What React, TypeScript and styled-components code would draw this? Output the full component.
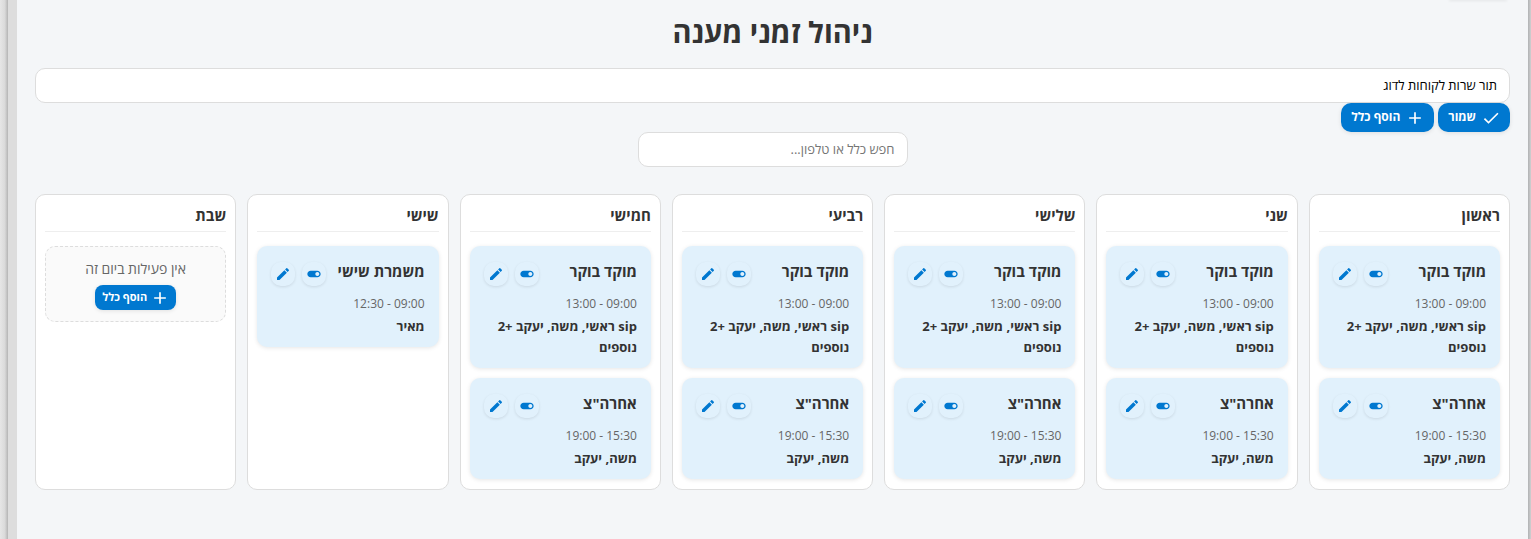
import React from "react";
import styled, { createGlobalStyle } from "styled-components";
import { MdAdd, MdCheck, MdEdit, MdToggleOn } from "react-icons/md";

type Rule = { name: string; hours: string; people: string };
type Day = { name: string; rules: Rule[] };

const morning: Rule = {
  name: "מוקד בוקר",
  hours: "09:00 - 13:00",
  people: "sip ראשי, משה, יעקב +2 נוספים",
};
const afternoon: Rule = { name: 'אחרה"צ', hours: "15:30 - 19:00", people: "משה, יעקב" };

const week: Day[] = [
  ...["ראשון", "שני", "שלישי", "רביעי", "חמישי"].map((name) => ({
    name,
    rules: [morning, afternoon],
  })),
  { name: "שישי", rules: [{ name: "משמרת שישי", hours: "09:00 - 12:30", people: "מאיר" }] },
  { name: "שבת", rules: [] },
];

const GlobalStyle = createGlobalStyle`
  *, *::before, *::after { box-sizing: border-box; }
  body {
    margin: 0;
    background: #f4f6f8;
    color: #333;
    font-family: "Open Sans", "Noto Sans", sans-serif;
    font-size: 13px;
    line-height: 21px;
  }
  button, input { font-family: inherit; }
`;

const Frame = styled.div`
  display: flex;
  min-height: 100vh;
  direction: rtl;
  overflow: hidden;
`;

const EndEdge = styled.div`
  flex: 0 0 3px;
  background: linear-gradient(to right, #b0b2b4, #cfd0d1);
`;

const StartEdge = styled.div`
  flex: 0 0 17px;
  border-right: 9px solid #ddd;
  background: linear-gradient(to right, #e6e6e6, #dadada 60%, #b4b4b4);
`;

const Page = styled.main`
  flex: 1;
  min-width: 0;
  padding: 0 18px 48px;
`;

/* Lower shadow of the control that is scrolled out above the heading. */
const ScrolledShadow = styled.div`
  width: 56px;
  margin: 0 4px 12px;
  box-shadow: 0 0 3px 1px rgba(0, 0, 0, 0.08);
`;

const Title = styled.h1`
  margin: 0 0 16px;
  font-size: 29px;
  line-height: 40px;
  font-weight: 700;
  text-align: center;
`;

const TextBox = styled.input`
  display: block;
  width: 100%;
  height: 35px;
  padding: 0 12px 2px;
  border: 1px solid #ddd;
  border-radius: 10px;
  background: #fff;
  color: #000;
  font-size: 13px;
`;

const SearchBox = styled(TextBox)`
  width: 270px;
  margin: 0 auto 27px;
  &::placeholder { color: #757575; opacity: 1; }
`;

const Toolbar = styled.div`
  display: flex;
  gap: 4px;
`;

const ActionButton = styled.button<{ $small?: boolean }>`
  display: inline-flex;
  align-items: center;
  gap: ${(p) => (p.$small ? 3 : 5)}px;
  height: ${(p) => (p.$small ? 25 : 29)}px;
  padding: ${(p) => (p.$small ? "0 6px 0 7px" : "0 9px 0 10px")};
  border: 0;
  border-radius: ${(p) => (p.$small ? 8 : 10)}px;
  background: #0078d0;
  box-shadow: 0 1px 4px rgba(0, 0, 0, 0.1);
  color: #fff;
  font-size: ${(p) => (p.$small ? 11 : 12)}px;
  line-height: 16px;
  font-weight: 700;
  white-space: nowrap;
  svg { width: 20px; height: 20px; }
`;

const ActionLabel = styled.span`
  padding-bottom: 2px;
`;

const WeekGrid = styled.div`
  display: grid;
  grid-template-columns: repeat(7, minmax(0, 1fr));
  gap: 11px;
`;

const DayColumn = styled.section`
  display: flex;
  flex-direction: column;
  gap: 10px;
  padding: 9px 9px 10px;
  border: 1px solid #ddd;
  border-radius: 10px;
  background: #fff;
`;

const DayName = styled.h2`
  margin: 0 0 4px;
  padding-bottom: 4px;
  border-bottom: 1px solid #eee;
  font-size: 15px;
  line-height: 23px;
  font-weight: 700;
`;

const RuleCard = styled.article`
  padding: 14px 14px 10px;
  border-radius: 10px;
  background: #e1f1fc;
  box-shadow: 0 1px 4px rgba(0, 0, 0, 0.1);
`;

const RuleHeader = styled.div`
  display: flex;
  align-items: flex-end;
  justify-content: space-between;
  margin-bottom: 7px;
`;

const RuleName = styled.h3`
  margin: 0;
  padding-bottom: 3px;
  font-size: 15px;
  line-height: 23px;
  font-weight: 700;
  white-space: nowrap;
`;

const RuleActions = styled.div`
  display: flex;
  gap: 7px;
`;

const IconButton = styled.button`
  display: flex;
  align-items: center;
  justify-content: center;
  width: 24px;
  height: 24px;
  padding: 0;
  border: 0;
  border-radius: 10px;
  background: transparent;
  box-shadow: 0 1px 3px rgba(0, 0, 0, 0.1);
  color: #0078d0;
  svg { width: 16px; height: 16px; }
`;

const Hours = styled.p`
  margin: 0 0 2px;
  color: #666;
  font-size: 12px;
`;

const People = styled.p`
  margin: 0;
  font-weight: 700;
`;

const EmptyDay = styled.div`
  display: flex;
  flex-direction: column;
  align-items: center;
  gap: 6px;
  padding: 11px;
  border: 1px dashed #ddd;
  border-radius: 10px;
  background: #fafafa;
  color: #666;
`;

const EmptyText = styled.p`
  margin: 0;
  font-size: 14px;
`;

function RuleItem({ rule }: { rule: Rule }) {
  return (
    <RuleCard>
      <RuleHeader>
        <RuleName>{rule.name}</RuleName>
        <RuleActions>
          <IconButton type="button" aria-label="הפעלה או כיבוי"><MdToggleOn /></IconButton>
          <IconButton type="button" aria-label="עריכה"><MdEdit /></IconButton>
        </RuleActions>
      </RuleHeader>
      <Hours>{rule.hours}</Hours>
      <People>{rule.people}</People>
    </RuleCard>
  );
}

export default function App() {
  return (
    <>
      <GlobalStyle />
      <Frame lang="he">
        <EndEdge />
        <Page>
          <ScrolledShadow />
          <Title>ניהול זמני מענה</Title>
          <TextBox aria-label="שם התור" defaultValue="תור שרות לקוחות לדוג" />
          <Toolbar>
            <ActionButton type="button"><MdCheck /><ActionLabel>שמור</ActionLabel></ActionButton>
            <ActionButton type="button"><MdAdd /><ActionLabel>הוסף כלל</ActionLabel></ActionButton>
          </Toolbar>
          <SearchBox type="text" aria-label="חיפוש" placeholder="חפש כלל או טלפון..." />
          <WeekGrid>
            {week.map((day) => (
              <DayColumn key={day.name}>
                <DayName>{day.name}</DayName>
                {day.rules.map((rule) => <RuleItem key={rule.name} rule={rule} />)}
                {day.rules.length === 0 && (
                  <EmptyDay>
                    <EmptyText>אין פעילות ביום זה</EmptyText>
                    <ActionButton type="button" $small><MdAdd /><ActionLabel>הוסף כלל</ActionLabel></ActionButton>
                  </EmptyDay>
                )}
              </DayColumn>
            ))}
          </WeekGrid>
        </Page>
        <StartEdge />
      </Frame>
    </>
  );
}
